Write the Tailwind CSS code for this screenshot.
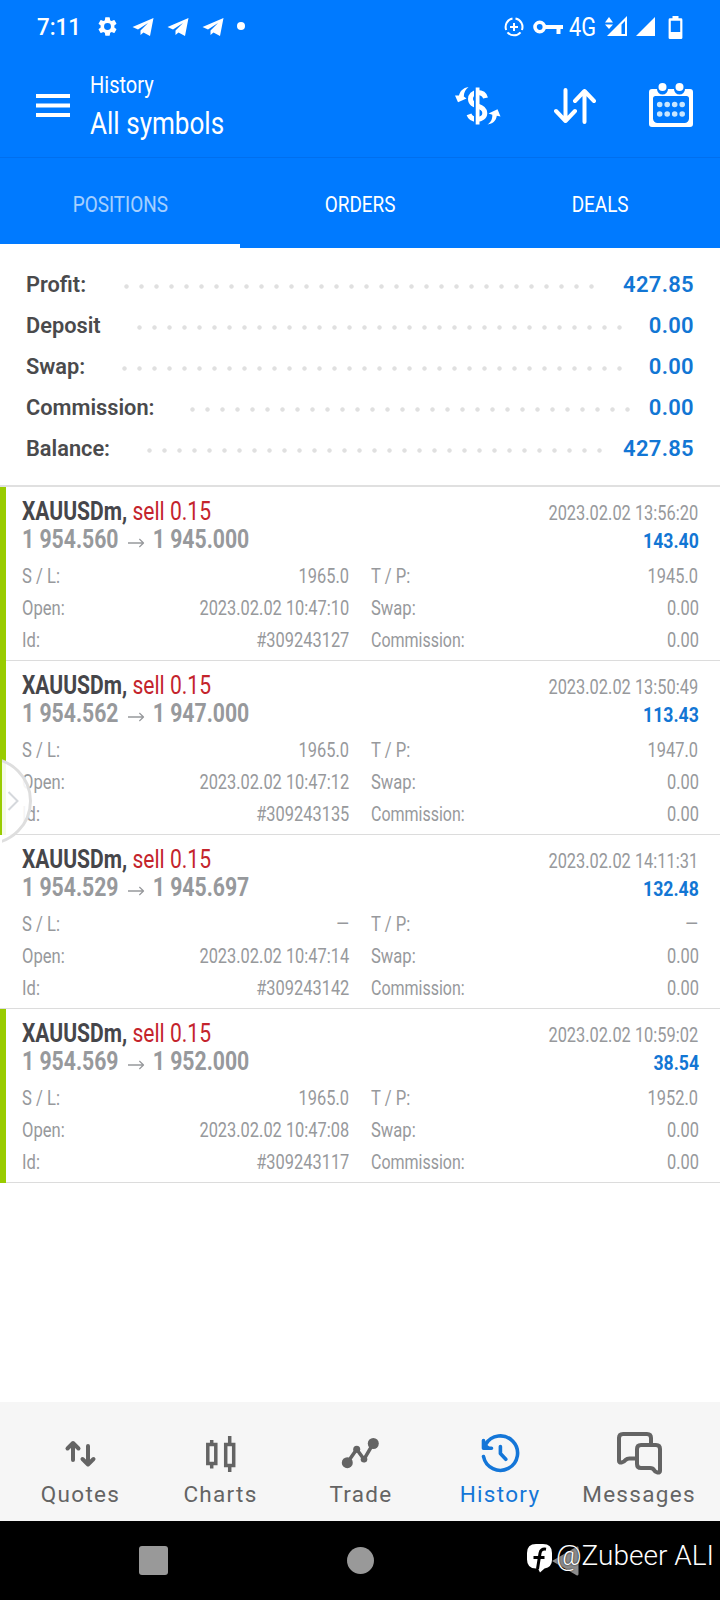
<!DOCTYPE html>
<html lang="en">
<head>
    <meta charset="UTF-8">
    <meta name="viewport" content="width=device-width, initial-scale=1.0">
    <title>History - All symbols</title>
    <script src="https://cdn.jsdelivr.net/npm/@tailwindcss/browser@4"></script>
</head>
<body class="bg-white font-['Roboto',sans-serif]">
<div class="relative flex h-[1600px] w-[720px] flex-col overflow-hidden bg-white">

    <header class="h-[248px] shrink-0 bg-[#007aff] text-white">
        <!-- status bar -->
        <div class="flex h-[54px] items-center pl-[37px] pr-[37px]">
            <span class="w-[59px] pt-[2px] text-[23px] leading-[54px] font-medium"><span class="inline-block origin-left scale-x-[.97]">7:11</span></span>
            <svg class="h-[23px] w-[23px] -translate-y-px" viewBox="0 0 24 24" fill="currentColor"><path d="M19.14 12.94c.04-.3.06-.61.06-.94 0-.32-.02-.64-.07-.94l2.03-1.58a.49.49 0 0 0 .12-.61l-1.92-3.32a.488.488 0 0 0-.59-.22l-2.39.96c-.5-.38-1.03-.7-1.62-.94l-.36-2.54a.484.484 0 0 0-.48-.41h-3.84c-.24 0-.43.17-.47.41l-.36 2.54c-.59.24-1.13.57-1.62.94l-2.39-.96c-.22-.08-.47 0-.59.22L2.74 8.87c-.12.21-.08.47.12.61l2.03 1.58c-.05.3-.09.63-.09.94s.02.64.07.94l-2.03 1.58a.49.49 0 0 0-.12.61l1.92 3.32c.12.22.37.29.59.22l2.39-.96c.5.38 1.03.7 1.62.94l.36 2.54c.05.24.24.41.48.41h3.84c.24 0 .44-.17.47-.41l.36-2.54c.59-.24 1.13-.56 1.62-.94l2.39.96c.22.08.47 0 .59-.22l1.92-3.32c.12-.22.07-.47-.12-.61l-2.01-1.58zM12 15.6A3.6 3.6 0 1 1 12 8.400a3.6 3.6 0 0 1 0 7.200z"/></svg>
            <div class="ml-[13px] flex gap-[13px]">
                <svg class="h-5 w-[22px]" viewBox="0 0 22 20" fill="currentColor"><path d="M0.500 10 21.500 1 18 19 11.500 15.500 8.500 18 8.500 13.500 16 6 6 12.500z"/></svg>
                <svg class="h-5 w-[22px]" viewBox="0 0 22 20" fill="currentColor"><path d="M0.500 10 21.500 1 18 19 11.500 15.500 8.500 18 8.500 13.500 16 6 6 12.500z"/></svg>
                <svg class="h-5 w-[22px]" viewBox="0 0 22 20" fill="currentColor"><path d="M0.500 10 21.500 1 18 19 11.500 15.500 8.500 18 8.500 13.500 16 6 6 12.500z"/></svg>
            </div>
            <span class="ml-[13px] size-2 -translate-y-px rounded-full bg-white"></span>
            <svg class="ml-auto h-5 w-5" viewBox="0 0 20 20" fill="none" stroke="currentColor" stroke-width="2"><path d="M11.500 1.600A8.500 8.500 0 0 1 17.900 13M16.500 15.300A8.500 8.500 0 0 1 3.500 15.300M2.200 13A8.500 8.500 0 0 1 8.500 1.600M10 6v8M6 10h8"/></svg>
            <svg class="ml-[9px] h-[14px] w-[30px]" viewBox="0 0 30 14" fill="none" stroke="currentColor"><circle cx="6.700" cy="7" r="4.700" stroke-width="3.600"/><path d="M12 7h18M25.500 7v7" stroke-width="4"/></svg>
            <span class="ml-[6px] w-[27px] pt-[2px] text-[25px] leading-[54px]"><span class="inline-block origin-left scale-x-[.87]">4G</span></span>
            <svg class="ml-[9px] h-[20px] w-[22px] -translate-y-px" viewBox="0 0 22 20" fill="currentColor"><path d="M0 6.500 4 1l4 5.500zM0 8.500h8L4 13zM2 20 22 0v20zM16.500 8.500v9.500H20V5z" fill-rule="evenodd"/></svg>
            <svg class="ml-[9px] h-[19px] w-[19px] -translate-y-px" viewBox="0 0 19 19" fill="currentColor"><path d="M0 19 19 0v19z"/></svg>
            <svg class="ml-[13px] h-[23px] w-[15px]" viewBox="0 0 15 23"><path fill="currentColor" fill-rule="evenodd" d="M4.500 0h6v2.300H13a1.400 1.400 0 0 1 1.400 1.400V21.500A1.400 1.400 0 0 1 13 23H2A1.400 1.400 0 0 1 .6 21.500V3.700A1.400 1.400 0 0 1 2 2.300h2.500zM2.800 4.800V16h9.400V4.800z"/></svg>
        </div>

        <!-- title bar -->
        <div class="flex h-[104px] items-start border-b border-[#006fee]">
            <svg class="mt-10 ml-9 h-6 w-[34px]" viewBox="0 0 34 24" fill="currentColor"><path d="M0 0h34v4H0zM0 9.500h34v4H0zM0 19h34v4H0z"/></svg>
            <div class="ml-[20px] w-[363px] pt-[12px] whitespace-nowrap">
                <p class="origin-left scale-x-[.87] text-[23px] leading-[40px]">History</p>
                <p class="-mt-[3px] origin-left scale-x-[.815] text-[32px] leading-[40px]">All symbols</p>
            </div>
            <svg class="mt-[33px] ml-[2px] h-[38px] w-[46px]" viewBox="0 0 46 38" fill="none">
                <path d="M30.500 11C29.500 7 26 5.500 22.300 5.500 18 5.500 15.500 8.500 15.500 12c0 4.500 3.500 5.700 6.800 6.800 4 1.200 7.500 3.200 7.500 7.200 0 4-3.500 6.300-7.500 6.300-4 0-7-1.300-8.300-5" stroke="currentColor" stroke-width="5"/>
                <path d="M20 0v38" stroke="#007aff" stroke-width="2"/>
                <path d="M22.600 .5v37" stroke="currentColor" stroke-width="3.800"/>
                <path fill="currentColor" d="M13.500 0C8 1 5 4 4 8.500L0 8.500 3 15.300 11.500 11.500 8.800 9.500C9 5 10.500 2.500 13.500 0zM32.500 37.500C38 36.500 41 34 41.800 28.700L45.500 29.500 42.500 22.200 33.500 26.500 37.300 27.700C37.500 32.500 35.500 35.500 32.500 37.500z"/>
            </svg>
            <svg class="mt-[33px] ml-[53px] h-[38px] w-[42px]" viewBox="0 0 42 38" fill="none" stroke="currentColor" stroke-width="4" stroke-linecap="round" stroke-linejoin="round"><path d="M11.500 3v31M2 24l9.500 10L21 24M30.500 35V4M21 14l9.500-10L40 14"/></svg>
            <svg class="mt-[29px] ml-[53px] h-11 w-11" viewBox="0 0 44 44">
                <path fill="currentColor" fill-rule="evenodd" d="M3 6h5a5.500 5.500 0 0 0 11 0h6a5.500 5.500 0 0 0 11 0h5a3 3 0 0 1 3 3v32a3 3 0 0 1-3 3H3a3 3 0 0 1-3-3V9a3 3 0 0 1 3-3zM6.500 13A2.500 2.500 0 0 0 4 15.500v20A4.500 4.500 0 0 0 8.500 40h27a4.500 4.500 0 0 0 4.500-4.500v-20A2.500 2.500 0 0 0 37.500 13z"/>
                <g fill="currentColor"><circle cx="13.500" cy="4" r="4"/><circle cx="30.500" cy="4" r="4"/></g>
                <path d="M10.700 21.500h22.600M10.700 31h22.600" stroke="#c8e6ff" stroke-width="5.600" stroke-linecap="round" stroke-dasharray="0 7.500"/>
            </svg>
        </div>

        <!-- tabs -->
        <nav class="grid h-[90px] grid-cols-3 text-center text-[22px] leading-[78px]">
            <div class="border-b-4 border-white pt-[8px] text-white/65"><span class="inline-block scale-x-[.86]">POSITIONS</span></div>
            <div class="pt-[8px]"><span class="inline-block scale-x-[.86]">ORDERS</span></div>
            <div class="pt-[8px]"><span class="inline-block scale-x-[.86]">DEALS</span></div>
        </nav>
    </header>

    <section id="summary" class="h-[239px] shrink-0 border-b-2 border-[#e0e0e0] pt-4 pr-[27px] pl-[26px]"></section>

    <main id="deals" class="grow"></main>

    <!-- bottom navigation -->
    <nav class="grid h-[119px] shrink-0 grid-cols-5 bg-[#f6f6f6] px-[10px] pt-7 text-[#646464]">
        <div class="flex flex-col items-center">
            <svg class="h-[50px] w-[60px]" viewBox="0 0 60 50" fill="none" stroke="currentColor" stroke-width="4" stroke-linecap="round" stroke-linejoin="round"><path d="M23 30V13M17.500 18.500l5.500-5.500 5.500 5.500M38 16v18M32.500 29l5.500 5.500 5.500-5.500"/></svg>
            <span class="-mt-[2px] pl-px text-[22.5px] leading-8 tracking-[1.3px]">Quotes</span>
        </div>
        <div class="flex flex-col items-center">
            <svg class="h-[50px] w-[60px]" viewBox="0 0 60 50" fill="none" stroke="currentColor" stroke-width="3.500"><path d="M17.800 14.500h8v19h-8zM21.700 10v4M21.700 34v4.500M35.700 14.500h8v21h-8zM39.700 6v8M39.700 36v6"/></svg>
            <span class="-mt-[2px] pl-px text-[22.5px] leading-8 tracking-[1.3px]">Charts</span>
        </div>
        <div class="flex flex-col items-center">
            <svg class="h-[50px] w-[60px]" viewBox="0 0 60 50" fill="currentColor"><path d="M17.300 32.700 26.700 19.300 34 29.300 43.300 13.300" fill="none" stroke="currentColor" stroke-width="3.600"/><circle cx="17.300" cy="32.700" r="5.500"/><circle cx="26.700" cy="19.300" r="3.500"/><circle cx="34" cy="29.300" r="3.300"/><circle cx="43.300" cy="13.500" r="5.500"/></svg>
            <span class="-mt-[2px] pl-[2px] text-[22.5px] leading-8 tracking-[1.3px]">Trade</span>
        </div>
        <div class="flex flex-col items-center text-[#1476d8]">
            <svg class="h-[50px] w-[60px]" viewBox="0 0 60 50" fill="none" stroke="currentColor" stroke-width="3.600" stroke-linecap="round" stroke-linejoin="round"><path d="M13.500 26.500A17.200 17.200 0 1 0 15.500 14.500M13.500 10.500v7.800h8M30.400 16.500v7l5.400 5.800"/><path fill="currentColor" stroke="none" d="M12 10l9 8.300h-9z"/></svg>
            <span class="-mt-[2px] text-[22.5px] leading-8 tracking-[1.3px]">History</span>
        </div>
        <div class="flex flex-col items-center">
            <svg class="h-[50px] w-[60px]" viewBox="0 0 60 50" fill="none" stroke="currentColor" stroke-width="4" stroke-linejoin="round"><path d="M41 13V8q0-4-4-4H13Q9 4 9 8v23q0 2 2.500 1.500 2.500-.5 4-2.500 1.500-1.500 4-1.500H27"/><path d="M31 15h15q4 0 4 4v22q0 2-2.500 1.500-2.500-.5-3.500-2.500-1-2-4-2h-9q-4 0-4-4V19q0-4 4-4z"/></svg>
            <span class="-mt-[2px] pr-[2px] text-[22.5px] leading-8 tracking-[1.3px]">Messages</span>
        </div>
    </nav>

    <!-- system navigation -->
    <footer class="relative flex h-[79px] shrink-0 items-center bg-black">
        <span class="ml-[139px] size-[29px] rounded-[3px] bg-[#999]"></span>
        <span class="ml-[179px] size-[27px] rounded-full bg-[#999]"></span>
        <svg class="ml-[178px] h-[30px] w-[27px]" viewBox="0 0 27 30" fill="#8c8c8c"><path d="M0 15 24.500 .8Q26.500 0 26.500 2v26q0 2-2 1.200z"/></svg>
        <!-- watermark -->
        <div class="absolute top-[14px] left-[527px] flex items-center text-white">
            <svg class="mt-[4px] h-[29px] w-[25px]" viewBox="0 0 25 29"><path fill="#fff" d="M9 0h7q9 0 9 9v7q0 7-7.500 8.500L13 28.500l-2-4H9q-9 0-9-9V9q0-9 9-9z"/><path d="M19 5.200q-5.200-1-6 4L10.500 25M6.500 13.500h11" fill="none" stroke="#000" stroke-width="3"/></svg>
            <span class="ml-[4px] origin-left text-[28px] leading-[42px] font-light whitespace-nowrap [text-shadow:0_0_2px_#000]">@Zubeer ALI</span>
        </div>
    </footer>

    <!-- side panel handle -->
    <div class="absolute top-[756px] left-[2px] h-[90px] w-[32px] overflow-hidden">
        <div class="absolute top-[1px] -left-[58px] size-[88px] rounded-full border-[3px] border-[#dedede] bg-white/90"></div>
        <svg class="absolute top-[34px] left-[5px] h-[22px] w-[12px]" viewBox="0 0 12 22" fill="none" stroke="#d5d8dc" stroke-width="2"><path d="M1.500 2 10.500 11 1.500 20"/></svg>
    </div>
</div>

<script>
    // labelWidth and dotsWidth are in px, dots repeat every 15px
    const summary = [
        { label: 'Profit:', value: '427.85', labelWidth: 93, dotsWidth: 480 },
        { label: 'Deposit', value: '0.00', labelWidth: 106, dotsWidth: 495 },
        { label: 'Swap:', value: '0.00', labelWidth: 91, dotsWidth: 510 },
        { label: 'Commission:', value: '0.00', labelWidth: 159, dotsWidth: 450 },
        { label: 'Balance:', value: '427.85', labelWidth: 116, dotsWidth: 465 },
    ];

    const deals = [
        { open: '1 954.560', close: '1 945.000', closed: '2023.02.02 13:56:20', profit: '143.40', sl: '1965.0', tp: '1945.0', opened: '2023.02.02 10:47:10', id: '#309243127', marked: true },
        { open: '1 954.562', close: '1 947.000', closed: '2023.02.02 13:50:49', profit: '113.43', sl: '1965.0', tp: '1947.0', opened: '2023.02.02 10:47:12', id: '#309243135', marked: true },
        { open: '1 954.529', close: '1 945.697', closed: '2023.02.02 14:11:31', profit: '132.48', sl: '—', tp: '—', opened: '2023.02.02 10:47:14', id: '#309243142', marked: false },
        { open: '1 954.569', close: '1 952.000', closed: '2023.02.02 10:59:02', profit: '38.54', sl: '1965.0', tp: '1952.0', opened: '2023.02.02 10:47:08', id: '#309243117', marked: true },
    ];

    document.getElementById('summary').innerHTML = summary.map(row => `
        <div class="flex h-[41px] items-center text-[22px] leading-[41px] font-semibold whitespace-nowrap">
            <span class="shrink-0 text-[#4a4a4c]" style="width:${row.labelWidth}px"><span class="inline-block origin-left scale-x-[.99]">${row.label}</span></span>
            <span class="mt-[3px] h-[15px] shrink-0 bg-[radial-gradient(circle,#e0e0e0_1.8px,transparent_2.6px)] bg-[length:15px_15px]" style="width:${row.dotsWidth}px"></span>
            <span class="-mr-px ml-auto tracking-[.3px] text-[#1276d4]">${row.value}</span>
        </div>`).join('');

    const detail = (label, value, labelScale = 'scale-x-[.81]') => `
        <div class="flex justify-between">
            <span class="origin-left ${labelScale}">${label}</span>
            <span class="origin-right scale-x-[.8]">${value}</span>
        </div>`;

    document.getElementById('deals').innerHTML = deals.map(deal => `
        <article class="relative h-[174px] border-b border-[#dcdcdc] pt-[10px] pr-[21.5px] pl-[22px] text-[20.5px] text-[#97999c] whitespace-nowrap">
            ${deal.marked ? '<span class="absolute top-0 -bottom-px left-0 w-[6px] bg-[#99cc00]"></span>' : ''}
            <div class="flex h-7 items-baseline justify-between leading-7">
                <span class="origin-left scale-x-[.81] text-[26px]"><b class="font-bold text-[#46464a]">XAUUSDm,</b> <span class="text-[#c4242c]">sell 0.15</span></span>
                <span class="origin-right scale-x-[.8]">${deal.closed}</span>
            </div>
            <div class="flex h-7 items-baseline justify-between leading-7 font-bold">
                <span class="flex origin-left scale-x-[.815] items-baseline text-[26px]">${deal.open}<svg class="mr-[10px] ml-[12px] h-[10px] w-[20px]" viewBox="0 0 20 10" preserveAspectRatio="none" fill="none" stroke="currentColor" stroke-width="1.600"><path d="M0 5h18M14 1l5 4-5 4"/></svg>${deal.close}</span>
                <span class="origin-right scale-x-[.86] text-[#1276d4]">${deal.profit}</span>
            </div>
            <div class="mt-[7px] grid grid-cols-2 gap-x-[22px] leading-8">
                ${detail('S / L:', deal.sl)}
                ${detail('T / P:', deal.tp)}
                ${detail('Open:', deal.opened)}
                ${detail('Swap:', '0.00')}
                ${detail('Id:', deal.id)}
                ${detail('Commission:', '0.00', 'scale-x-[.78]')}
            </div>
        </article>`).join('');
</script>
</body>
</html>
